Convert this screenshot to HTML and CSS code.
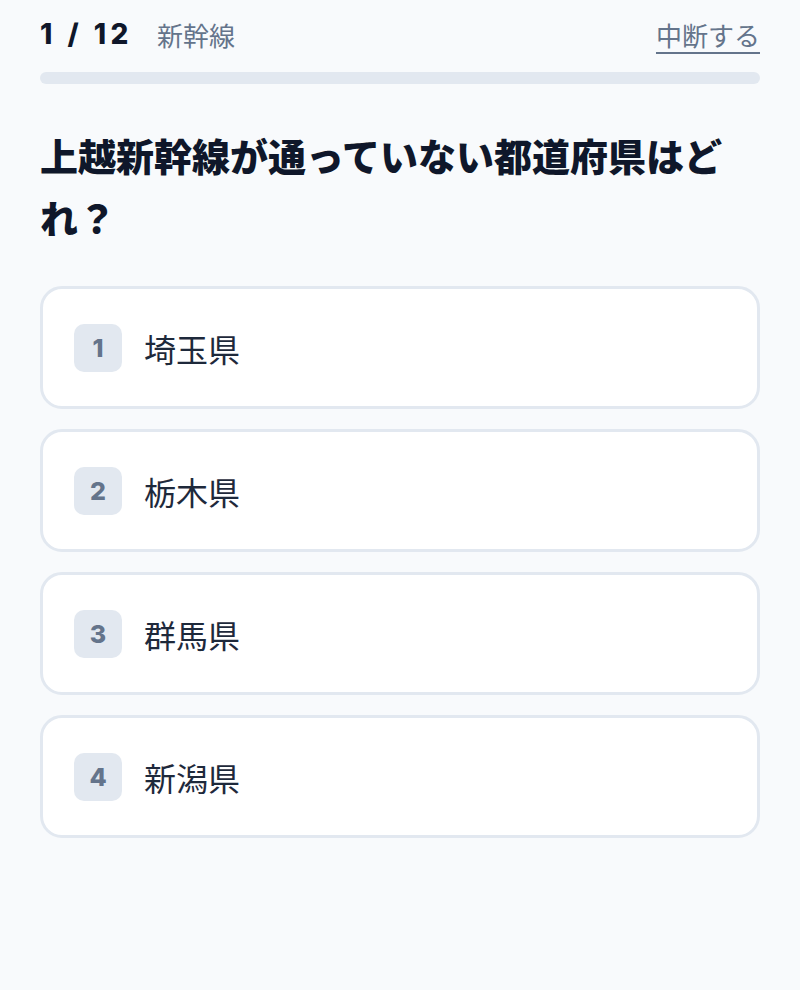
FILE: index.html
```html
<!DOCTYPE html>
<html lang="ja">
<head>
    <meta charset="UTF-8">
    <meta name="viewport" content="width=device-width, initial-scale=1.0">
    <title>クイズ</title>
    <link rel="stylesheet" href="styles.css">
</head>
<body>
    <div class="quiz">
        <div class="quiz-head">
            <div class="quiz-info">
                <span class="count">1 / 12</span>
                <span class="category">新幹線</span>
            </div>
            <a class="quit" href="#">中断する</a>
        </div>
        <div class="progress"><div class="progress-fill" style="width: 0%"></div></div>

        <h1 class="question">上越新幹線が通っていない都道府県はどれ？</h1>

        <div class="choices">
            <button class="choice"><span class="num">1</span><span class="label">埼玉県</span></button>
            <button class="choice"><span class="num">2</span><span class="label">栃木県</span></button>
            <button class="choice"><span class="num">3</span><span class="label">群馬県</span></button>
            <button class="choice"><span class="num">4</span><span class="label">新潟県</span></button>
        </div>
    </div>
</body>
</html>
```

FILE: styles.css
```css
body {
    margin: 0;
    background: #f8fafc;
    font-family: Inter, "Noto Sans CJK JP", sans-serif;
    color: #0f172a;
}
.quiz {
    padding: 14px 40px 40px;
}
.quiz-head {
    display: flex;
    justify-content: space-between;
    align-items: center;
    height: 40px;
}
.quiz-info {
    display: flex;
    align-items: center;
    gap: 24px;
}
.count {
    font-size: 28px;
    font-weight: 800;
    letter-spacing: 0.16em;
    color: #0f172a;
}
.category {
    font-size: 26px;
    color: #64748b;
}
.quit {
    font-size: 26px;
    color: #64748b;
    text-decoration: underline;
    text-underline-offset: 6px;
    text-decoration-thickness: 2px;
}
.progress {
    margin-top: 18px;
    height: 12px;
    border-radius: 6px;
    background: #e2e8f0;
    overflow: hidden;
}
.progress-fill {
    height: 100%;
    background: #3b82f6;
}
.question {
    margin: 40px 0 38px;
    font-family: "Noto Sans CJK JP", sans-serif;
    font-size: 38px;
    line-height: 62px;
    font-weight: 800;
    color: #0f172a;
}
.choices {
    display: flex;
    flex-direction: column;
    gap: 20px;
}
.choice {
    display: flex;
    align-items: center;
    gap: 22px;
    height: 123px;
    box-sizing: border-box;
    padding: 0 31px;
    background: #fff;
    border: 3px solid #e2e8f0;
    border-radius: 22px;
    font-family: inherit;
    text-align: left;
    cursor: pointer;
}
.num {
    display: flex;
    align-items: center;
    justify-content: center;
    width: 48px;
    height: 48px;
    border-radius: 10px;
    background: #e2e8f0;
    color: #64748b;
    font-size: 25px;
    font-weight: 800;
}
.label {
    font-size: 32px;
    color: #1e293b;
}
```
